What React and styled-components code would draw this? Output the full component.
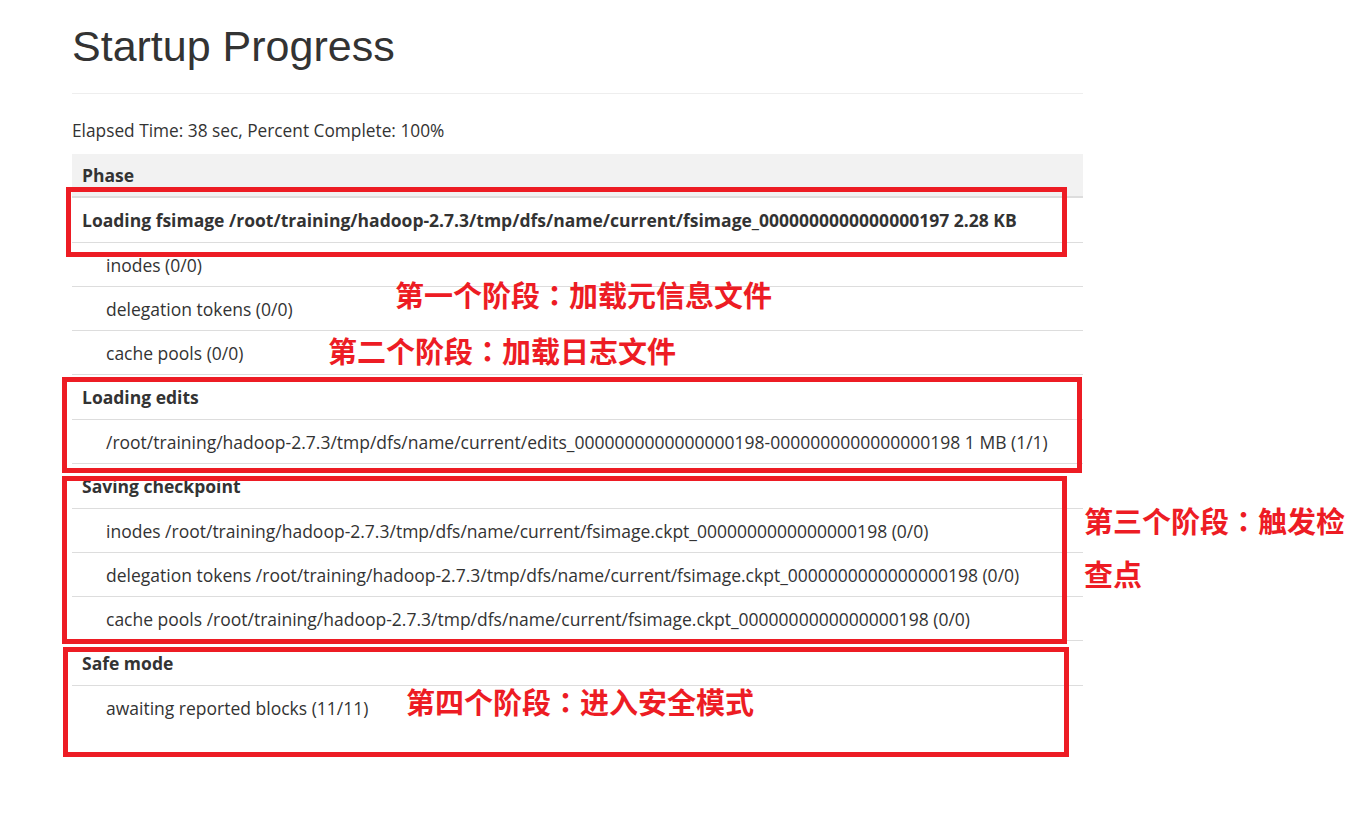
import React from "react"
import styled, { createGlobalStyle } from "styled-components"

const GlobalStyle = createGlobalStyle`
  html, body {
    margin: 0;
    padding: 0;
    background: #fff;
  }
  body {
    font-family: "Open Sans", "Noto Sans", sans-serif;
    color: #333;
  }
`

const phases = [
  {
    name: "Loading fsimage /root/training/hadoop-2.7.3/tmp/dfs/name/current/fsimage_0000000000000000197 2.28 KB",
    steps: ["inodes (0/0)", "delegation tokens (0/0)", "cache pools (0/0)"],
  },
  {
    name: "Loading edits",
    steps: [
      "/root/training/hadoop-2.7.3/tmp/dfs/name/current/edits_0000000000000000198-0000000000000000198 1 MB (1/1)",
    ],
  },
  {
    name: "Saving checkpoint",
    steps: [
      "inodes /root/training/hadoop-2.7.3/tmp/dfs/name/current/fsimage.ckpt_0000000000000000198 (0/0)",
      "delegation tokens /root/training/hadoop-2.7.3/tmp/dfs/name/current/fsimage.ckpt_0000000000000000198 (0/0)",
      "cache pools /root/training/hadoop-2.7.3/tmp/dfs/name/current/fsimage.ckpt_0000000000000000198 (0/0)",
    ],
  },
  {
    name: "Safe mode",
    steps: ["awaiting reported blocks (11/11)"],
  },
]

const boxes = [
  { left: 66, top: 187, width: 1001, height: 70 },
  { left: 62, top: 377, width: 1020, height: 96 },
  { left: 62, top: 476, width: 1005, height: 168 },
  { left: 63, top: 647, width: 1006, height: 110 },
]

// annotation text: stage, then what happens in it
const notes = [
  { left: 395, top: 268, stage: "第一个阶段", what: "加载元信息文件" },
  { left: 328, top: 324, stage: "第二个阶段", what: "加载日志文件" },
  { left: 1084, top: 494, width: 275, stage: "第三个阶段", what: "触发检查点" },
  { left: 406, top: 675, stage: "第四个阶段", what: "进入安全模式" },
]

const App = () => {
  let first = true
  return (
    <Page>
      <GlobalStyle />
      <Container>
        <Title>Startup Progress</Title>
        <Divider />
        <Summary>Elapsed Time: 38 sec, Percent Complete: 100%</Summary>
        <Table>
          <thead>
            <tr>
              <HeadCell>Phase</HeadCell>
            </tr>
          </thead>
          <tbody>
            {phases.map((phase) => {
              const rows = [
                <tr key={phase.name}>
                  <Cell $bold $first={first}>{phase.name}</Cell>
                </tr>,
              ]
              first = false
              phase.steps.forEach((step) => {
                rows.push(
                  <tr key={phase.name + step}>
                    <Cell $indent>{step}</Cell>
                  </tr>
                )
              })
              return rows
            })}
          </tbody>
        </Table>
      </Container>

      {boxes.map((b, i) => (
        <Marker key={i} style={{ left: b.left, top: b.top, width: b.width, height: b.height }} />
      ))}
      {notes.map((n) => (
        <Note key={n.stage} style={{ left: n.left, top: n.top, width: n.width }}>
          {n.stage}
          <Colon>：</Colon>
          {n.what}
        </Note>
      ))}
    </Page>
  )
}

export default App

const Page = styled.div`
  position: relative;
  width: 1370px;
  min-height: 818px;
`

const Container = styled.div`
  width: 1011px;
  padding-left: 72px;
  padding-top: 23px;
`

const Title = styled.h1`
  margin: 0;
  font-family: "Liberation Sans", Arial, sans-serif;
  font-size: 43px;
  font-weight: 400;
  line-height: 47px;
  color: #333;
`

const Divider = styled.hr`
  margin: 23px 0 0;
  border: 0;
  border-top: 1px solid #eee;
`

const Summary = styled.p`
  margin: 27px 0 13px;
  font-size: 17.3px;
  line-height: 20px;
`

const Table = styled.table`
  width: 100%;
  border-collapse: collapse;
  font-size: 17.5px;
`

const HeadCell = styled.th`
  background: #f2f2f2;
  text-align: left;
  font-weight: 700;
  height: 43px;
  padding: 0 10px;
  box-sizing: border-box;
  line-height: 20px;
  border-bottom: 2px solid #ddd;
`

const Cell = styled.td`
  height: ${(p) => (p.$bold ? "44px" : "43px")};
  box-sizing: content-box;
  padding: 0 10px 0 ${(p) => (p.$indent ? "34px" : "10px")};
  line-height: 20px;
  font-weight: ${(p) => (p.$bold ? 700 : 400)};
  border-top: ${(p) => (p.$first ? "0" : "1px solid #ddd")};
  white-space: nowrap;
`

const Marker = styled.div`
  position: absolute;
  box-sizing: border-box;
  border: 5px solid #ed1c24;
`

const Note = styled.div`
  position: absolute;
  font-family: "Noto Sans CJK SC", sans-serif;
  font-size: 29px;
  font-weight: 700;
  line-height: 53px;
  color: #ed1c24;
`

const Colon = styled.span`
  font-family: "Noto Sans CJK TC", "Noto Sans CJK SC", sans-serif;
`
